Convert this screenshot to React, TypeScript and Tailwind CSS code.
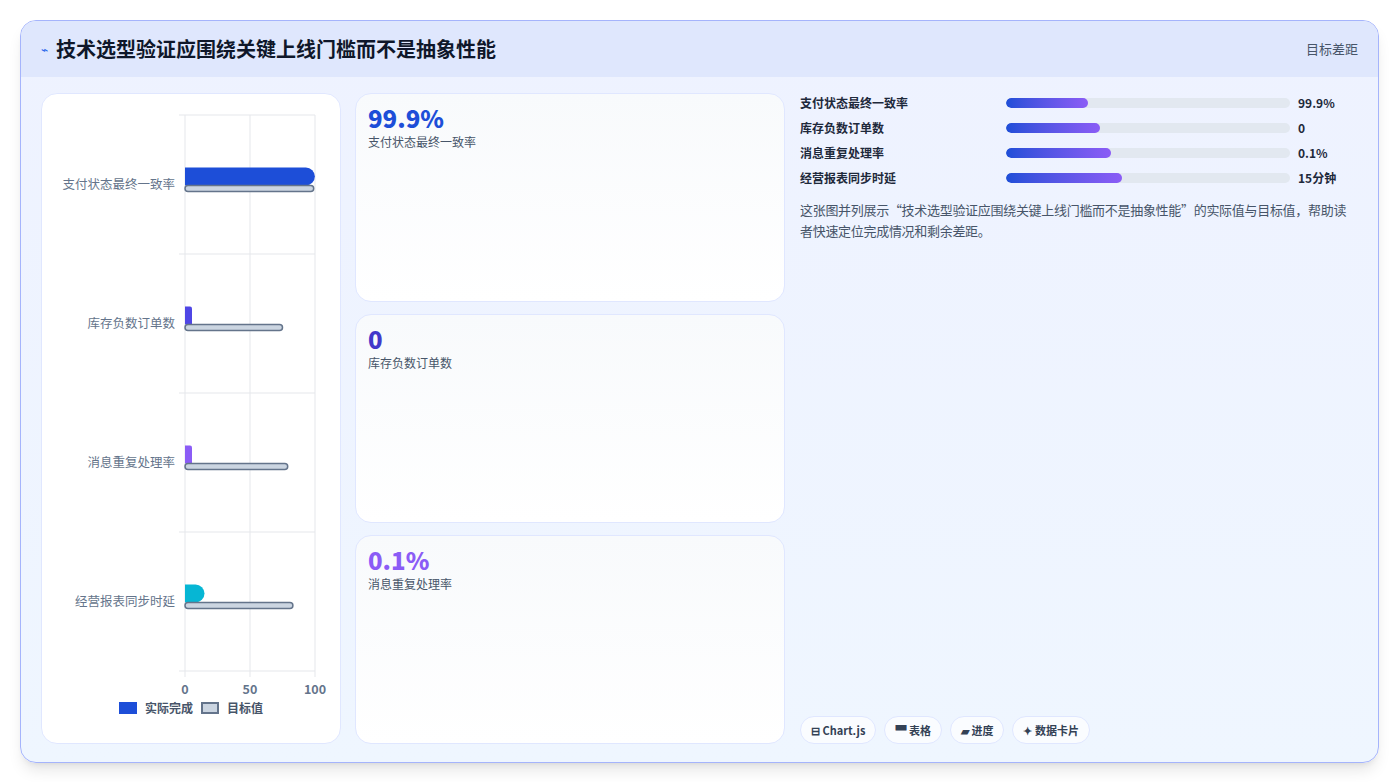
const font = { fontFamily: '"Noto Sans CJK SC", "Noto Sans", sans-serif' }

const rows = [
  { label: '支付状态最终一致率', actual: 99.9, target: 99, color: '#1d4ed8', value: '99.9%', pct: 29 },
  { label: '库存负数订单数', actual: 5, target: 75, color: '#4f46e5', value: '0', pct: 33 },
  { label: '消息重复处理率', actual: 5, target: 79, color: '#8b5cf6', value: '0.1%', pct: 37 },
  { label: '经营报表同步时延', actual: 15, target: 83, color: '#06b6d4', value: '15分钟', pct: 41 },
]

const cards = [
  { value: '99.9%', label: '支付状态最终一致率', color: 'text-[#1d4ed8]' },
  { value: '0', label: '库存负数订单数', color: 'text-[#4338ca]' },
  { value: '0.1%', label: '消息重复处理率', color: 'text-[#8b5cf6]' },
]

function Chart() {
  const x0 = 143, w = 130, y0 = 21, rh = 139
  return (
    <svg width="298" height="606" className="block">
      {[0, 50, 100].map((t) => (
        <line key={t} x1={x0 + (w * t) / 100} x2={x0 + (w * t) / 100} y1={y0} y2={y0 + rh * 4 + 6} stroke="#e5e7eb" />
      ))}
      {[0, 1, 2, 3, 4].map((i) => (
        <line key={i} x1={x0 - 6} x2={x0 + w} y1={y0 + rh * i} y2={y0 + rh * i} stroke="#e5e7eb" />
      ))}
      {rows.map((r, i) => {
        const cy = y0 + rh * i + rh / 2
        const aw = (w * r.actual) / 100
        const bar =
          aw > 10
            ? `M${x0} ${cy - 17} h${aw - 9} a9 9 0 0 1 9 9 a9 9 0 0 1 -9 9 h${-(aw - 9)} z`
            : `M${x0} ${cy - 17} h5 a2 2 0 0 1 2 2 v16 h-7 z`
        return (
          <g key={r.label}>
            <text x={x0 - 10} y={cy + 4} textAnchor="end" fontSize="12.5" fill="#64748b" style={font}>{r.label}</text>
            <path d={bar} fill={r.color} />
            <rect x={x0} y={cy + 1} width={(w * r.target) / 100} height={6} rx={3} fill="#cbd5e1" stroke="#64748b" strokeWidth="1.5" />
          </g>
        )
      })}
      {[0, 50, 100].map((t) => (
        <text key={t} x={x0 + (w * t) / 100} y={y0 + rh * 4 + 23} textAnchor="middle" fontSize="12.5" fontWeight="700" fill="#64748b" style={font}>{t}</text>
      ))}
    </svg>
  )
}

export default function App() {
  return (
    <div className="w-[1399px] h-[782px] bg-white p-5" style={font}>
      <div className="h-[743px] rounded-2xl border border-[#a5b4fc] bg-gradient-to-b from-[#eef2ff] to-[#eff6ff] shadow-lg overflow-hidden flex flex-col">
        <div className="h-[56px] shrink-0 bg-[#dfe7fd] flex items-center justify-between px-5">
          <div className="flex items-center gap-2">
            <span className="text-[#2563eb] text-xs">⌁</span>
            <h1 className="text-[20px] font-bold text-[#0f172a]">技术选型验证应围绕关键上线门槛而不是抽象性能</h1>
          </div>
          <span className="text-[13px] text-[#475569]">目标差距</span>
        </div>
        <div className="flex-1 min-h-0 flex gap-[14px] px-5 pt-[16px] pb-[18px]">
          <div className="w-[300px] shrink-0 bg-white rounded-2xl border border-[#e0e7ff] flex flex-col">
            <Chart />
            <div className="flex justify-center items-center gap-2 text-xs text-[#475569] font-bold">
              <span className="w-[18px] h-[12px] bg-[#1d4ed8] inline-block" />实际完成
              <span className="w-[18px] h-[12px] bg-[#cbd5e1] border-2 border-[#64748b] inline-block" />目标值
            </div>
          </div>
          <div className="w-[430px] shrink-0 flex flex-col gap-3">
            {cards.map((c) => (
              <div key={c.label} className="flex-1 rounded-2xl border border-[#e0e7ff] bg-gradient-to-b from-[#f8fafc] to-white px-3 py-2">
                <div className={`text-2xl font-extrabold ${c.color}`}>{c.value}</div>
                <div className="text-xs text-[#475569]">{c.label}</div>
              </div>
            ))}
          </div>
          <div className="flex-1 flex flex-col pl-[1px]">
            <div className="flex flex-col gap-[6px]">
              {rows.map((r) => (
                <div key={r.label} className="flex items-center h-[19px] text-xs font-bold text-[#1e293b]">
                  <span className="w-[206px]">{r.label}</span>
                  <div className="w-[284px] h-[10px] rounded-full bg-[#e2e8f0] overflow-hidden">
                    <div className="h-full rounded-full bg-gradient-to-r from-[#1d4ed8] to-[#8b5cf6]" style={{ width: `${r.pct}%` }} />
                  </div>
                  <span className="ml-2">{r.value}</span>
                </div>
              ))}
            </div>
            <p className="mt-3 text-[13px] leading-[21px] tracking-[-0.3px] text-[#475569]">
              这张图并列展示“技术选型验证应围绕关键上线门槛而不是抽象性能”的实际值与目标值，帮助读者快速定位完成情况和剩余差距。
            </p>
            <div className="mt-auto flex gap-2">
              {['⊟ Chart.js', '▀ 表格', '▰ 进度', '✦ 数据卡片'].map((t) => (
                <span key={t} className="px-[10px] h-[28px] flex items-center rounded-full bg-white/70 border border-[#e0e7ff] text-[11px] font-bold text-[#334155]">{t}</span>
              ))}
            </div>
          </div>
        </div>
      </div>
    </div>
  )
}
